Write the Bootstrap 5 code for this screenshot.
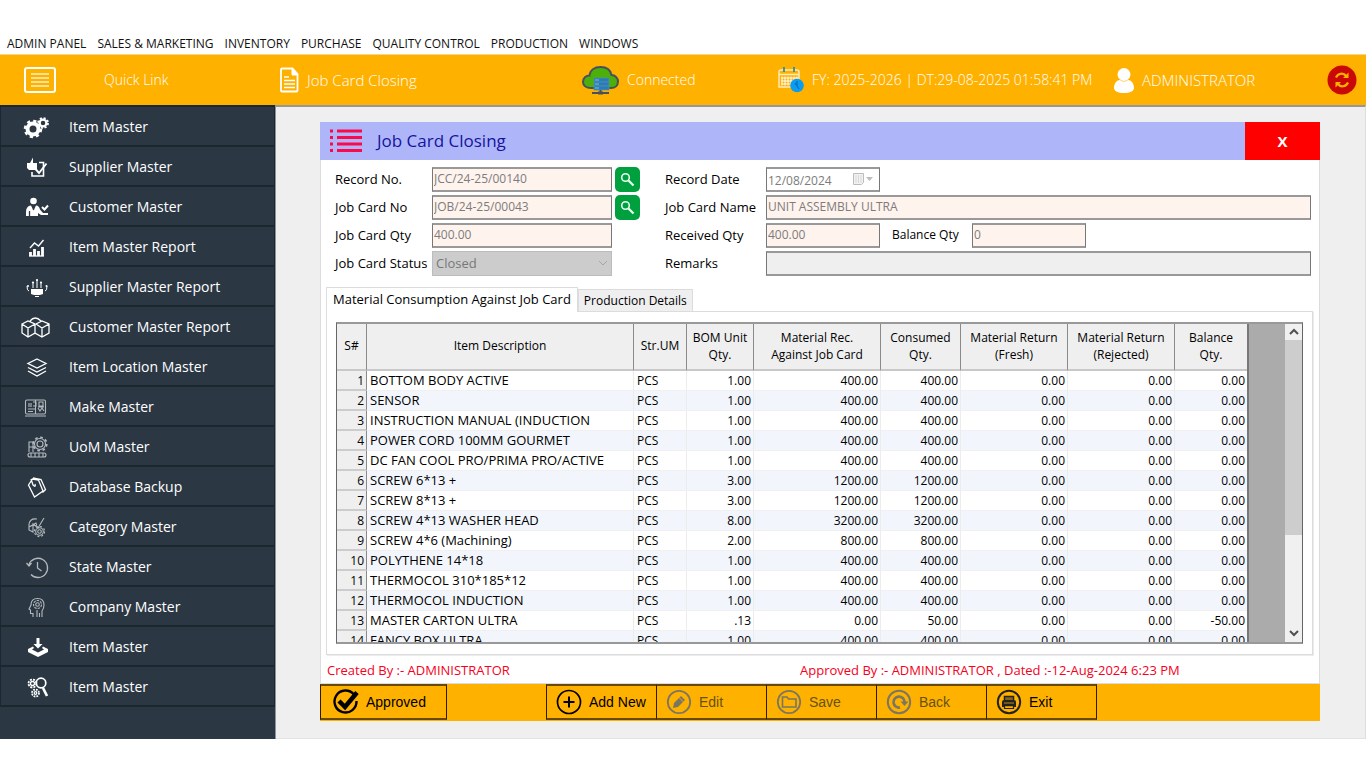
<!DOCTYPE html>
<html lang="en">
<head>
<meta charset="utf-8">
<meta name="viewport" content="width=device-width, initial-scale=1">
<title>Job Card Closing</title>
<link href="https://cdn.jsdelivr.net/npm/bootstrap@5.3.0/dist/css/bootstrap.min.css" rel="stylesheet">
<style>
  body { font-family: "Open Sans", "Noto Sans", sans-serif; font-size: 13px; line-height: 18px; color: #000; background: #fff; }
  svg { display: block; flex: none; }
  .app-menu { padding: 35px 7px 1px; column-gap: 11px; font-size: 12px; }
  .app-menu a { color: #111; }
  .app-bar { display: grid; grid-template-columns: 280px 302fr 196fr 336fr 213fr 39px; align-items: center; height: 51px; background: #ffb100; color: #fff; font-size: 14px; font-weight: 300; border-top: 1px solid #f5d48c; }
  .bar-lg { font-size: 15px; }
  .side { width: 276px; background: #2b3844; border-right: 1px solid #8d9399; }
  .side a { height: 40px; color: #fff; font-size: 14px; border: 1px solid #1b262e; border-bottom-width: 2px; border-top-width: 0; gap: 19px; padding-left: 20px; padding-top: 2px; }
  .side a:first-child { height: 42px; border-top-width: 2px; }
  .side svg { width: 29px; height: 26px; padding: 1px 0; fill: none; stroke: #fff; stroke-width: 1.3; }
  .side .solid-ico { fill: #fff; stroke: none; }
  .side .dim { opacity: .65; stroke-width: 1.1; }
  .work { background: #efefef; border-top: 2px solid #96969a; padding: 15px 45px 17px 44px; border-right: 1px solid #ddd; border-bottom: 1px solid #e2e2e2; }
  .panel-head { height: 38px; background: #aeb6f9; color: #14149b; }
  .panel-head h1 { font-size: 17px; line-height: 20px; font-weight: 400; margin: 0 0 0 15px; }
  .close-btn { width: 75px; background: #f00; color: #fff; border: 0; font-weight: 700; font-size: 15px; }
  .panel-body { background: #fff; border: 1px solid #dcdcdc; border-top: 0; }
  .frm { padding: 5px 8px 0 14px; }
  .frm-line { display: grid; grid-template-columns: 97px 180px 53px 101px 1fr; align-items: center; height: 28px; }
  .fld { height: 25px; width: 100%; border: 1px solid #777; border-top: 2px solid #999; border-bottom: 2px solid #999; border-radius: 0; background: #fff3ed; color: #7c7c7c; padding: 0 2px 2px 1px; font-size: 12px; line-height: 16px; outline: 0; }
  .fld-narrow { width: 114px; }
  .fld-date { background: #fff; padding-top: 2px; padding-bottom: 0; }
  .fld-off { background: #efefef; }
  .status-sel { height: 25px; width: 100%; border: 1px solid #bcbcbc; background: #ccc; color: #787878; appearance: none; padding: 0 3px; font-size: 13px; opacity: 1; }
  .in-box { right: 4px; top: 5px; pointer-events: none; }
  .find-btn { width: 25px; height: 25px; margin-left: 3px; border: 0; padding: 0; border-radius: 5px; background: #00a03e; }
  .bal-label { width: 80px; margin-left: 12px; font-size: 12px; }
  .tabset { margin: 10px 6px 0 5px; }
  .tab-btn { background: #efefef; border: 1px solid #dcdcdc; border-bottom: 0; padding: 0 5px; height: 22px; font-size: 12px; white-space: nowrap; }
  .tab-btn.on { background: #fff; height: 25px; padding: 0 6px 3px; margin-bottom: -1px; position: relative; font-size: 13px; }
  .tab-pane-box { border: 1px solid #dcdcdc; box-shadow: 1px 1px #ececec; padding: 10px 9px; }
  .sheet { height: 322px; border: 1px solid #666; border-top: 2px solid #999; border-bottom: 2px solid #999; background: #ababab; }
  .sheet table { width: 912px; table-layout: fixed; border-collapse: separate; border-spacing: 0; background: #fff; border-right: 2px solid #777; font-size: 12px; line-height: 17px; }
  .sheet thead th { height: 47px; background: #efefef; font-weight: 400; text-align: center; border-right: 1px solid #8a8a8a; border-bottom: 2px solid #c8c8c8; padding: 0 0 2px; }
  .sheet tbody td, .sheet tbody th { height: 20px; padding: 0 2px; line-height: 17px; border-right: 1px solid #ececec; border-bottom: 1px solid #f0f0f0; text-align: right; white-space: nowrap; overflow: hidden; font-weight: 400; }
  .sheet tbody th { background: #efefef; border-right: 1px solid #8a8a8a; border-bottom: 2px solid #ccc; }
  .sheet tbody td:nth-child(2), .sheet tbody td:nth-child(3) { text-align: left; padding-left: 3px; }
  .sheet tbody td:nth-child(2) { font-size: 13px; }
  .sheet tbody tr:nth-child(even) td { background: #f2f6fc; }
  .sheet th:last-child, .sheet td:last-child { border-right: 0 !important; }
  .sbar { width: 17px; background: #f0f0f0; }
  .sbar-thumb { height: 195px; background: #cdcdcd; }
  .audit { color: #f5001d; font-size: 13px; padding: 6px 6px 4px; display: grid; grid-template-columns: 473px 1fr; }
  .acts { height: 37px; background: #ffb100; font-family: "Liberation Sans", Arial, sans-serif; font-size: 14px; }
  .acts button { width: 110px; height: 36px; gap: 7px; background: #ffb100; color: #000; border: 1px solid #2a1c00; border-left: 0; border-top: 2px solid #6a4a00; border-bottom: 2px solid #6a4a00; padding: 0 0 0 9px; }
  .acts button.lead-btn { width: 127px; border-left: 1px solid #2a1c00; padding-left: 12px; }
  .acts button.first-btn { width: 111px; border-left: 1px solid #2a1c00; margin-left: 99px; }
  .acts button:disabled { color: #665216; }
  .acts button:disabled svg { color: #7b7660; }
</style>
</head>
<body>
<nav class="app-menu d-flex flex-wrap" aria-label="Modules">
  <a class="text-decoration-none" href="#">ADMIN PANEL</a>
  <a class="text-decoration-none" href="#">SALES &amp; MARKETING</a>
  <a class="text-decoration-none" href="#">INVENTORY</a>
  <a class="text-decoration-none" href="#">PURCHASE</a>
  <a class="text-decoration-none" href="#">QUALITY CONTROL</a>
  <a class="text-decoration-none" href="#">PRODUCTION</a>
  <a class="text-decoration-none" href="#">WINDOWS</a>
</nav>

<header class="app-bar">
  <div class="d-flex align-items-center">
    <button class="btn p-0 border-0 ms-4" aria-label="Toggle quick links">
      <svg width="32" height="26" fill="none" stroke="#fff"><rect x="1" y="1" width="30" height="24" rx="2" stroke-width="2"/><path d="M7 7h18M7 11h18M7 15h18M7 19h18" stroke-width="1.5" stroke="#ffefc8"/></svg>
    </button>
    <span class="ms-5">Quick Link</span>
  </div>
  <div class="d-flex align-items-center gap-2">
    <svg width="19" height="26" fill="none" stroke="#fff"><path d="M2 1.500h10.500l5 5.500v16.500a1 1 0 0 1-1 1H2a1 1 0 0 1-1-1v-21a1 1 0 0 1 1-1z" stroke-width="1.800"/><path d="M12 1l6 7h-6z" fill="#fff"/><path d="M4 10h5M4 13.500h11M4 17h11M4 20.500h11" stroke-width="1.500"/></svg>
    <span class="bar-lg">Job Card Closing</span>
  </div>
  <div class="d-flex align-items-center gap-2">
    <svg width="37" height="30"><path d="M9 23C4 23 1 20.500 1 17c0-4 3-6.500 6.500-6.500C8 5 12.500 2 18.500 2s10 3 11 8c3.500 0 6.500 3 6.500 6.500 0 4-3 6.500-7 6.500z" fill="#4caf0a" stroke="#47505c" stroke-width="2"/><g fill="#2b7abb" stroke="#4c94a8" stroke-width=".7"><rect x="12" y="13" width="15" height="4"/><rect x="12" y="17" width="15" height="4"/><rect x="12" y="21" width="15" height="4"/></g><path d="M13 15h4m-4 4h4m-4 4h4" stroke="#8dd4e8" stroke-width=".8"/><path d="M18.500 25v3M10 28h6m5 0h6" stroke="#47505c" stroke-width="2"/><rect x="16" y="26.500" width="5" height="3" fill="#47505c"/></svg>
    <span>Connected</span>
  </div>
  <div class="d-flex align-items-center gap-2">
    <svg width="26" height="26" fill="none"><path d="M1 5a2 2 0 0 1 2-2h16a2 2 0 0 1 2 2v15H1zM1 7.500h20" stroke="#ffedc2" stroke-width="1.400"/><path d="M4 9.500v9m3-9v9m3-9v9m3-9v9m3-9v6m3-6v5M3 11h17M3 14h17M3 17h10" stroke="#fff" stroke-width="1"/><path d="M6 0v5M16 0v5" stroke="#368e9a" stroke-width="1.800"/><circle cx="19" cy="18.500" r="6.800" fill="#0b9df0"/><path d="M19 14v5l2 3M17 16l1 2" stroke="#0072c0" stroke-width="1.300"/></svg>
    <span>FY: 2025-2026 | DT:29-08-2025 01:58:41 PM</span>
  </div>
  <div class="d-flex align-items-center gap-2">
    <svg width="20" height="25" fill="#fff"><circle cx="10" cy="6.500" r="6.500"/><path d="M0 20c0-5 3-8 6-8q4 3 8 0c3 0 6 3 6 8 0 3-4 5-10 5S0 23 0 20z"/></svg>
    <span class="bar-lg">ADMINISTRATOR</span>
  </div>
  <button class="btn p-0 border-0" aria-label="Refresh">
    <svg width="30" height="30"><circle cx="15" cy="15" r="14.500" fill="#cb0808"/><g fill="none" stroke="#ffb100" stroke-width="2.200"><path d="M9 12.500c2-4.500 7.500-5 10-1.500M21 17.500c-2 4.500-7.500 5-10 1.500"/></g><path d="M21.500 7.500v5.500h-5.500zM8.500 22.500v-5.500h5.500z" fill="#ffb100"/></svg>
  </button>
</header>

<div class="d-flex">
  <nav class="side flex-shrink-0 d-flex flex-column" aria-label="Quick links">
    <a class="d-flex align-items-center text-decoration-none" href="#"><svg viewBox="0 0 29 24"><circle cx="12" cy="14" r="5.500" stroke-width="4"/><circle cx="12" cy="14" r="8" stroke-width="2.500" stroke-dasharray="3.200 3.080"/><circle cx="22" cy="8" r="3.400" stroke-width="2.300"/><circle cx="22" cy="8" r="5" stroke-width="1.800" stroke-dasharray="2.100 1.830"/></svg>Item Master</a>
    <a class="d-flex align-items-center text-decoration-none" href="#"><svg viewBox="0 0 29 24"><path d="M6 8h3l3-5.500V8h4v7H8l-2-2z" fill="#fff" stroke="none"/><path d="M18 7.500h4.500V21H11v-4" stroke-width="1.600"/><path d="M14.500 14l3.500 4 7.500-9.500" stroke-width="1.900"/></svg>Supplier Master</a>
    <a class="d-flex align-items-center text-decoration-none" href="#"><svg class="solid-ico" viewBox="0 0 29 24"><circle cx="12.500" cy="6" r="3.300"/><path d="M5 21v-4q0-6 5-6.500l2.500 5 2.500-5q3 0 4 4l3 3.500h5v2h-7l-3-2v3z"/><path d="M21 12l2.500 2.500L27 10.500" fill="none" stroke="#fff" stroke-width="2"/><path d="M8.500 16v5M12.500 11v4" stroke="#2b3844"/></svg>Customer Master</a>
    <a class="d-flex align-items-center text-decoration-none" href="#"><svg viewBox="0 0 29 24"><path d="M9 13l4.500-5 4 3 5-6" stroke-width="1.400"/><path d="M9.500 21v-4M13.500 21v-7M17.500 21v-5M21.500 21v-9" stroke-width="2.800"/><path d="M8 21h15"/></svg>Item Master Report</a>
    <a class="d-flex align-items-center text-decoration-none" href="#"><svg viewBox="0 0 29 24"><path d="M10 14h12v5l-3 1h-6l-3-1z" fill="#fff" stroke="none"/><path d="M8 16q-2 0-2-5M24 16q2 0 2-5M12 13V8M16 13V5M20 13V8M14 21.500h4" stroke-width="1"/><g fill="#fff" stroke="none"><circle cx="7" cy="11" r="1"/><circle cx="25.500" cy="11" r="1"/><circle cx="12" cy="7.500" r="1.100"/><circle cx="16" cy="5" r="1.100"/><circle cx="20" cy="7.500" r="1.100"/></g></svg>Supplier Master Report</a>
    <a class="d-flex align-items-center text-decoration-none" href="#"><svg viewBox="0 0 29 24" stroke-width="1.500"><path d="M1 9l6-3 7 3v9l-7 4-6-4zM1 9l6 4 7-4M7 13v9M15 9l6-3 7 3v9l-7 4-7-4V9M15 9l6 4 7-4M21 13v9M9 6q5-6 11 0M14 9v7"/></svg>Customer Master Report</a>
    <a class="d-flex align-items-center text-decoration-none" href="#"><svg viewBox="0 0 29 24"><path d="M16 4l9 4.500-9 4.500-9-4.500zM7 12.500l9 4.500 9-4.500M7 16l9 5 9-5" stroke-width="1.300"/></svg>Item Location Master</a>
    <a class="d-flex align-items-center text-decoration-none" href="#"><svg class="dim" viewBox="0 0 29 24"><rect x="4.500" y="5" width="20" height="14" rx="1.500"/><path d="M8 8v4m2-4v4M12 7h3v4h-3M18 7h4v4h-4zM7 14h7m-7 2.500h5M14.500 5v14M17 13l2 3 2-3 2 3M17 12h6M4 21h21"/></svg>Make Master</a>
    <a class="d-flex align-items-center text-decoration-none" href="#"><svg class="dim" viewBox="0 0 29 24"><circle cx="19" cy="9" r="3"/><circle cx="19" cy="9" r="5.500"/><circle cx="19" cy="9" r="6.800" stroke-width="1.600" stroke-dasharray="2.670 2.670"/><path d="M8 17V7h4v10M8 12h6"/><rect x="7" y="18" width="18" height="4" rx="2"/><path d="M10 18v4m4-4v4m4-4v4m4-4v4"/></svg>UoM Master</a>
    <a class="d-flex align-items-center text-decoration-none" href="#"><svg viewBox="0 0 29 24"><path d="M7.500 10l4-6 6 1 4.500 11-8.500 6zM12 3l8 1.500 4.500 10-3 3M10 4l2 6q3 3 2-1"/></svg>Database Backup</a>
    <a class="d-flex align-items-center text-decoration-none" href="#"><svg class="dim" viewBox="0 0 29 24"><circle cx="18.500" cy="16.500" r="1.800"/><circle cx="18.500" cy="16.500" r="3.800"/><circle cx="18.500" cy="16.500" r="5.100" stroke-dasharray="2 2"/><path d="M8 9q1-6 8-5M8 9v6l4 2V9l5 4 6-10M8 12l4-2q5 2 3-2z"/></svg>Category Master</a>
    <a class="d-flex align-items-center text-decoration-none" href="#"><svg class="dim" viewBox="0 0 29 24"><path d="M8 9.500a9.600 9.600 0 1 1 2 10M5.500 8l2.500 3 2.500-3M16.500 7v6l4 3" stroke-width="1.300"/></svg>State Master</a>
    <a class="d-flex align-items-center text-decoration-none" href="#"><svg class="dim" viewBox="0 0 29 24"><path d="M12 22v-3.500H9.500V15L8 14l2-4q0-6.500 6.500-6.500T23 10q0 3-2 6v6M16 15v7M18.500 18v4"/><circle cx="16.500" cy="9.500" r="1.800"/><circle cx="16.500" cy="9.500" r="4" stroke-dasharray="2.500 1"/></svg>Company Master</a>
    <a class="d-flex align-items-center text-decoration-none" href="#"><svg class="solid-ico" viewBox="0 0 29 24"><path d="M15.500 3h3v6h3L17 13.500 12.500 9h3z"/><path d="M7 14l5-2.500 1 1.500-2 1.500 6 3 6-3-2-1.500 1-1.500 5 2.500v3l-10 5-10-5z"/></svg>Item Master</a>
    <a class="d-flex align-items-center text-decoration-none" href="#"><svg viewBox="0 0 29 24"><circle cx="20" cy="8" r="4.800" stroke-width="1.700"/><path d="M22 13l4 8" stroke-width="2.600"/><circle cx="11.500" cy="8.500" r="2"/><circle cx="11.500" cy="8.500" r="4" stroke-width="1.800" stroke-dasharray="2.100 1.040"/><circle cx="14.500" cy="18" r="1.300"/><circle cx="14.500" cy="18" r="3.500" stroke-width="1.800" stroke-dasharray="1.750 1"/></svg>Item Master</a>
  </nav>

  <main class="work flex-grow-1">
    <div class="panel-head d-flex">
      <div class="d-flex align-items-center flex-grow-1 ps-2">
        <svg width="34" height="26" stroke="#fa0a4a" stroke-width="3"><path d="M2 3h3M2 9.500h3M2 16h3M2 22.500h3M9 3h25M9 9.500h25M9 16h25M9 22.500h25"/></svg>
        <h1>Job Card Closing</h1>
      </div>
      <button class="close-btn">X</button>
    </div>

    <div class="panel-body">
      <form class="frm">
        <div class="frm-line">
          <label for="recNo">Record No.</label>
          <input class="fld" id="recNo" value="JCC/24-25/00140" readonly>
          <button type="button" class="find-btn" aria-label="Find record"><svg width="25" height="25" fill="none" stroke="#e6fff0"><circle cx="10.500" cy="10.500" r="3.800" stroke-width="1.600"/><path d="M13.500 13.500l5 5" stroke-width="2.300"/></svg></button>
          <label for="recDate">Record Date</label>
          <div class="position-relative fld-narrow">
            <input class="fld fld-date" id="recDate" value="12/08/2024" readonly>
            <svg class="in-box position-absolute" width="24" height="15" fill="none" stroke="#bcbcbc"><path d="M1.500 1.500h10v9l-2 2h-8z" fill="#f2f2f2"/><path d="M4 3v8m2.500-8v8M9 3v8" stroke="#d8d8d8"/><path d="M14 5h7l-3.500 4z" fill="#bcbcbc" stroke="none"/></svg>
          </div>
        </div>
        <div class="frm-line">
          <label for="jobNo">Job Card No</label>
          <input class="fld" id="jobNo" value="JOB/24-25/00043" readonly>
          <button type="button" class="find-btn" aria-label="Find job card"><svg width="25" height="25" fill="none" stroke="#e6fff0"><circle cx="10.500" cy="10.500" r="3.800" stroke-width="1.600"/><path d="M13.500 13.500l5 5" stroke-width="2.300"/></svg></button>
          <label for="jobName">Job Card Name</label>
          <input class="fld" id="jobName" value="UNIT ASSEMBLY ULTRA" readonly>
        </div>
        <div class="frm-line">
          <label for="jobQty">Job Card Qty</label>
          <input class="fld" id="jobQty" value="400.00" readonly>
          <span></span>
          <label for="recQty">Received Qty</label>
          <div class="d-flex align-items-center">
            <input class="fld fld-narrow" id="recQty" value="400.00" readonly>
            <label class="bal-label" for="balQty">Balance Qty</label>
            <input class="fld fld-narrow" id="balQty" value="0" readonly>
          </div>
        </div>
        <div class="frm-line">
          <label class="text-nowrap" for="jobStatus">Job Card Status</label>
          <div class="position-relative">
            <select class="status-sel" id="jobStatus" disabled><option>Closed</option></select>
            <svg class="in-box position-absolute" width="10" height="15" fill="none" stroke="#a5a5a5"><path d="M1 5l4 4 4-4"/></svg>
          </div>
          <span></span>
          <label for="remarks">Remarks</label>
          <input class="fld fld-off" id="remarks" readonly>
        </div>
      </form>

      <div class="tabset">
        <div class="d-flex align-items-end" role="tablist">
          <button class="tab-btn on" role="tab" aria-selected="true">Material Consumption Against Job Card</button>
          <button class="tab-btn" role="tab" aria-selected="false">Production Details</button>
        </div>
        <div class="tab-pane-box">
          <div class="sheet d-flex">
            <div class="flex-grow-1 overflow-hidden">
              <table>
                <colgroup><col style="width:30px"><col style="width:267px"><col style="width:53px"><col style="width:67px"><col style="width:127px"><col style="width:80px"><col style="width:107px"><col style="width:107px"><col style="width:72px"></colgroup>
                <thead><tr><th>S#</th><th>Item Description</th><th>Str.UM</th><th>BOM Unit<br>Qty.</th><th>Material Rec.<br>Against Job Card</th><th>Consumed<br>Qty.</th><th>Material Return<br>(Fresh)</th><th>Material Return<br>(Rejected)</th><th>Balance<br>Qty.</th></tr></thead>
                <tbody>
                  <tr><th>1</th><td>BOTTOM BODY ACTIVE</td><td>PCS</td><td>1.00</td><td>400.00</td><td>400.00</td><td>0.00</td><td>0.00</td><td>0.00</td></tr>
                  <tr><th>2</th><td>SENSOR</td><td>PCS</td><td>1.00</td><td>400.00</td><td>400.00</td><td>0.00</td><td>0.00</td><td>0.00</td></tr>
                  <tr><th>3</th><td>INSTRUCTION MANUAL (INDUCTION</td><td>PCS</td><td>1.00</td><td>400.00</td><td>400.00</td><td>0.00</td><td>0.00</td><td>0.00</td></tr>
                  <tr><th>4</th><td>POWER CORD 100MM GOURMET</td><td>PCS</td><td>1.00</td><td>400.00</td><td>400.00</td><td>0.00</td><td>0.00</td><td>0.00</td></tr>
                  <tr><th>5</th><td>DC FAN COOL PRO/PRIMA PRO/ACTIVE</td><td>PCS</td><td>1.00</td><td>400.00</td><td>400.00</td><td>0.00</td><td>0.00</td><td>0.00</td></tr>
                  <tr><th>6</th><td>SCREW 6*13 +</td><td>PCS</td><td>3.00</td><td>1200.00</td><td>1200.00</td><td>0.00</td><td>0.00</td><td>0.00</td></tr>
                  <tr><th>7</th><td>SCREW 8*13 +</td><td>PCS</td><td>3.00</td><td>1200.00</td><td>1200.00</td><td>0.00</td><td>0.00</td><td>0.00</td></tr>
                  <tr><th>8</th><td>SCREW 4*13 WASHER HEAD</td><td>PCS</td><td>8.00</td><td>3200.00</td><td>3200.00</td><td>0.00</td><td>0.00</td><td>0.00</td></tr>
                  <tr><th>9</th><td>SCREW 4*6 (Machining)</td><td>PCS</td><td>2.00</td><td>800.00</td><td>800.00</td><td>0.00</td><td>0.00</td><td>0.00</td></tr>
                  <tr><th>10</th><td>POLYTHENE 14*18</td><td>PCS</td><td>1.00</td><td>400.00</td><td>400.00</td><td>0.00</td><td>0.00</td><td>0.00</td></tr>
                  <tr><th>11</th><td>THERMOCOL 310*185*12</td><td>PCS</td><td>1.00</td><td>400.00</td><td>400.00</td><td>0.00</td><td>0.00</td><td>0.00</td></tr>
                  <tr><th>12</th><td>THERMOCOL INDUCTION</td><td>PCS</td><td>1.00</td><td>400.00</td><td>400.00</td><td>0.00</td><td>0.00</td><td>0.00</td></tr>
                  <tr><th>13</th><td>MASTER CARTON ULTRA</td><td>PCS</td><td>.13</td><td>0.00</td><td>50.00</td><td>0.00</td><td>0.00</td><td>-50.00</td></tr>
                  <tr><th>14</th><td>FANCY BOX ULTRA</td><td>PCS</td><td>1.00</td><td>400.00</td><td>400.00</td><td>0.00</td><td>0.00</td><td>0.00</td></tr>
                </tbody>
              </table>
            </div>
            <div class="sbar flex-shrink-0 d-flex flex-column" aria-hidden="true">
              <svg width="17" height="16" fill="none" stroke="#505050" stroke-width="2"><path d="M5 10l4-4 4 4"/></svg>
              <div class="sbar-thumb"></div>
              <svg class="mt-auto" width="17" height="16" fill="none" stroke="#505050" stroke-width="2"><path d="M5 5l4 4 4-4"/></svg>
            </div>
          </div>
        </div>
      </div>

      <div class="audit">
        <span>Created By :- ADMINISTRATOR</span>
        <span>Approved By :- ADMINISTRATOR , Dated :-12-Aug-2024 6:23 PM</span>
      </div>
    </div>

    <div class="acts d-flex">
      <button class="lead-btn d-flex align-items-center"><svg width="26" height="26" fill="none" stroke="currentColor"><path d="M21 5.500A11 11 0 1 0 23.500 12" stroke-width="2.400"/><path d="M6 12l6 6L24 3.500" stroke-width="4.500"/></svg>Approved</button>
      <button class="first-btn d-flex align-items-center"><svg width="26" height="26" fill="none" stroke="currentColor"><circle cx="13" cy="13" r="11.500" stroke-width="1.700"/><path d="M13 7.500v11M7.500 13h11" stroke-width="2"/></svg>Add New</button>
      <button class="d-flex align-items-center" disabled><svg width="26" height="26" fill="none" stroke="currentColor"><circle cx="13" cy="13" r="11.200" stroke-width="1.800"/><path d="M7 19l1-5 7-7 4 4-7 7z" fill="currentColor" stroke="none"/><path d="M13 8.500l4.500 4.500" stroke="#ffb100" stroke-width=".8"/></svg>Edit</button>
      <button class="d-flex align-items-center" disabled><svg width="26" height="26" fill="none" stroke="currentColor"><circle cx="13" cy="13" r="11.200" stroke-width="1.800"/><path d="M6.500 8h4.500l1.500 2H20v8H6.500z" stroke-width="1.600"/></svg>Save</button>
      <button class="d-flex align-items-center" disabled><svg width="26" height="26" fill="none" stroke="currentColor"><circle cx="13" cy="13" r="11.200" stroke-width="2"/><path d="M14 18.500a5.500 5.500 0 1 1 4.500-5.500" stroke-width="2.600"/><path d="M14.500 12.500h8l-4 4.500z" fill="currentColor" stroke="none"/></svg>Back</button>
      <button class="d-flex align-items-center"><svg width="26" height="26" fill="none" stroke="#222"><circle cx="13" cy="13" r="11.200" stroke-width="2"/><path d="M6 13q0-2 2-2h10q2 0 2 2v5H6z" fill="#222" stroke="none"/><path d="M8.500 11V7.500h9V11" stroke-width="1.500" fill="#8a6510"/><path d="M8 14h10M9 17.500h8" stroke="#c08a10"/><path d="M8.500 17v2.500h9V17" stroke-width="1.200"/></svg>Exit</button>
    </div>
  </main>
</div>
<script src="https://cdn.jsdelivr.net/npm/bootstrap@5.3.0/dist/js/bootstrap.bundle.min.js"></script>
</body>
</html>
